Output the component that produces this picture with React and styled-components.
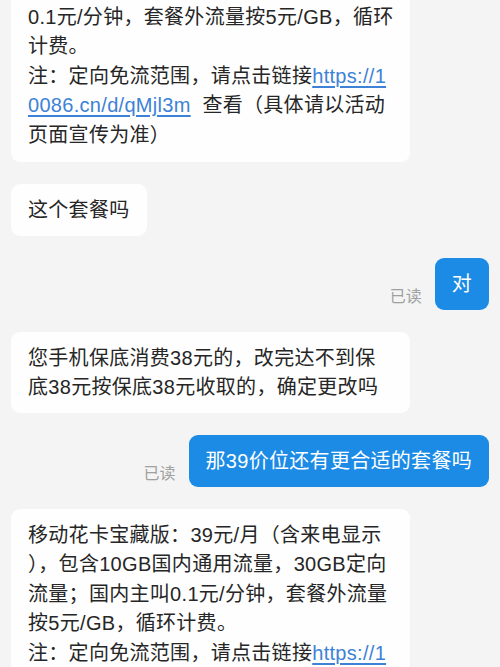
import React from 'react';
import styled, { createGlobalStyle } from 'styled-components';

const GlobalStyle = createGlobalStyle`
    html, body {
        margin: 0;
        padding: 0;
        background: #f4f4f4;
        font-family: "Liberation Sans", "Noto Sans CJK SC", sans-serif;
    }
`;

const Chat = styled.div`
    width: 500px;
    height: 667px;
    overflow: hidden;
    background: #f4f4f4;
    display: flex;
    flex-direction: column;
    gap: 22px;
    padding: 0 11px;
    box-sizing: border-box;
`;

const Row = styled.div`
    display: flex;
    align-items: flex-end;
    justify-content: ${({ mine }) => (mine ? 'flex-end' : 'flex-start')};
    gap: 13px;
`;

const Bubble = styled.div`
    box-sizing: border-box;
    width: ${({ wide }) => (wide ? '399px' : 'auto')};
    padding: ${({ cut }) => (cut ? '3px 17px 12px' : '12px 17px 10.5px')};
    border-radius: ${({ cut }) => (cut ? '0 0 9px 9px' : '9px')};
    background: ${({ mine }) => (mine ? '#1b8be6' : '#fefefe')};
    color: ${({ mine }) => (mine ? '#fff' : '#262626')};
    font-size: 20px;
    line-height: 29.4px;
    letter-spacing: 0.3px;
    white-space: nowrap;
`;

const Link = styled.span`
    color: #3d82d6;
    text-decoration: underline;
    text-underline-offset: 3px;
`;

const Read = styled.span`
    color: #a0a0a0;
    font-size: 16px;
    line-height: 20px;
    margin-bottom: 3px;
`;

const App = () => (
    <>
        <GlobalStyle />
        <Chat>
            <Row>
                <Bubble wide cut>
                    0.1元/分钟，套餐外流量按5元/GB，循环
                    <br />
                    计费。
                    <br />
                    注：定向免流范围，请点击链接<Link>https://1</Link>
                    <br />
                    <Link>0086.cn/d/qMjl3m</Link>&nbsp; 查看（具体请以活动
                    <br />
                    页面宣传为准）
                </Bubble>
            </Row>
            <Row>
                <Bubble>这个套餐吗</Bubble>
            </Row>
            <Row mine>
                <Read>已读</Read>
                <Bubble mine>对</Bubble>
            </Row>
            <Row>
                <Bubble wide>
                    您手机保底消费38元的，改完达不到保
                    <br />
                    底38元按保底38元收取的，确定更改吗
                </Bubble>
            </Row>
            <Row mine>
                <Read>已读</Read>
                <Bubble mine>那39价位还有更合适的套餐吗</Bubble>
            </Row>
            <Row>
                <Bubble wide>
                    移动花卡宝藏版：39元/月（含来电显示
                    <br />
                    ），包含10GB国内通用流量，30GB定向
                    <br />
                    流量；国内主叫0.1元/分钟，套餐外流量
                    <br />
                    按5元/GB，循环计费。
                    <br />
                    注：定向免流范围，请点击链接<Link>https://1</Link>
                    <br />
                    <Link>0086.cn/d/qMjl3m</Link>&nbsp; 查看（具体请以活动
                    <br />
                    页面宣传为准）
                </Bubble>
            </Row>
        </Chat>
    </>
);

export default App;
